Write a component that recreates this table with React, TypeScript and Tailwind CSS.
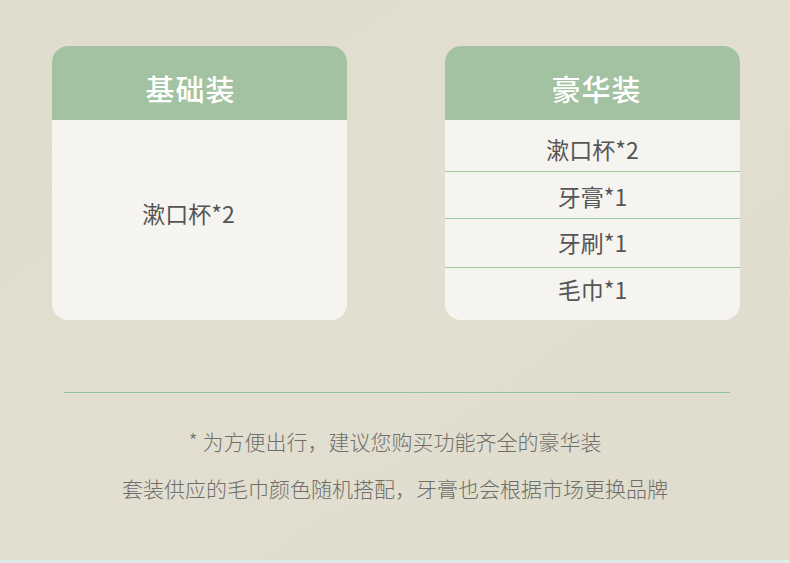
const font = { fontFamily: '"Noto Sans CJK SC", "Noto Sans", sans-serif' };

const deluxeItems = [
  { label: "漱口杯*2", h: "h-[52px]", pad: "pt-[8px]" },
  { label: "牙膏*1", h: "h-[47px]", pad: "pt-[2px]" },
  { label: "牙刷*1", h: "h-[49px]", pad: "pb-[2px]" },
  { label: "毛巾*1", h: "flex-1", pad: "pb-[10px]" },
];

function CardHeader({ title, shift }: { title: string; shift: string }) {
  return (
    <div
      className={`h-[74px] bg-[#a3c2a1] flex items-center justify-center text-white text-[29px] font-medium tracking-[1px] pt-[12px] ${shift}`}
    >
      {title}
    </div>
  );
}

export default function App() {
  return (
    <div style={font} className="w-[790px] h-[563px] flex flex-col bg-gradient-to-br from-[#e0ddce] via-[#e2dfd1] to-[#dfdccd]">
      <div className="flex-1 flex flex-col">
        <div className="flex gap-[98px] pl-[52px] pt-[46px]">
          {/* 基础装 */}
          <div className="w-[295px] h-[274px] rounded-[16px] overflow-hidden flex flex-col bg-[#f5f4f0]">
            <CardHeader title="基础装" shift="pr-[18px]" />
            <div className="flex-1 flex items-center justify-center text-[23px] text-[#555555] pb-[14px] pr-[22px]">
              漱口杯*2
            </div>
          </div>

          {/* 豪华装 */}
          <div className="w-[295px] h-[274px] rounded-[16px] overflow-hidden flex flex-col bg-[#f5f4f0]">
            <CardHeader title="豪华装" shift="pl-[8px]" />
            {deluxeItems.map((item, i) => (
              <div
                key={item.label}
                className={`${item.h} ${item.pad} flex items-center justify-center text-[23px] text-[#555555] ${
                  i < deluxeItems.length - 1 ? "border-b border-[#9dc7a0]" : ""
                }`}
              >
                {item.label}
              </div>
            ))}
          </div>
        </div>

        <div className="mx-[64px] w-[666px] h-px bg-[#8fc49a] mt-[72px]" />

        <div className="flex flex-col items-center text-[21px] text-[#6f6e6a] leading-[30px] font-light">
          <p className="mt-[33px]">* 为方便出行，建议您购买功能齐全的豪华装</p>
          <p className="mt-[17px]">套装供应的毛巾颜色随机搭配，牙膏也会根据市场更换品牌</p>
        </div>
      </div>
      <div className="h-[3px] bg-[#dfe9e7]" />
    </div>
  );
}
